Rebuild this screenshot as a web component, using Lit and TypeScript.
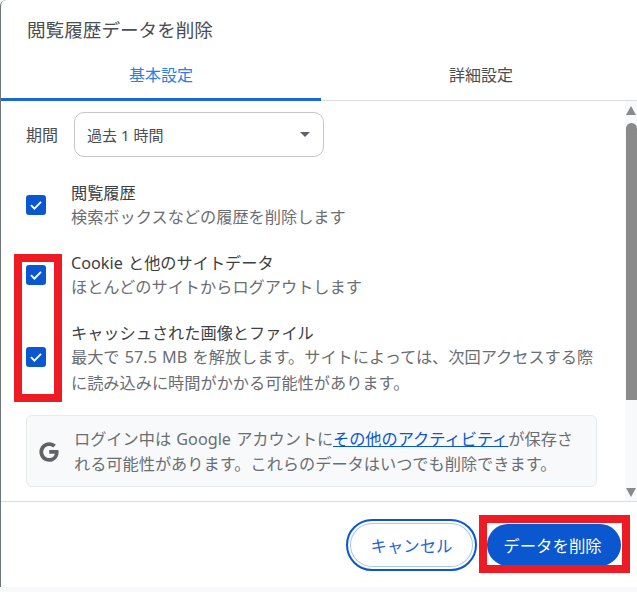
import { LitElement, html, css, svg } from "lit";
import { customElement } from "lit/decorators.js";

@customElement("app-root")
export class AppRoot extends LitElement {
  static styles = css`
    :host { display: block; width: 637px; height: 592px; position: relative; overflow: hidden; background: #f8f9fb; font-family: "Noto Sans", "Noto Sans CJK JP", sans-serif; }
    .dialog { width: 637px; height: 587px; box-sizing: border-box; background: #fff; border-left: 1px solid #70757a; border-top-left-radius: 6px; display: flex; flex-direction: column; }
    .title { font-size: 18.6px; line-height: 24px; color: #4a4e52; padding: 18px 0 1px 26px; height: 24px; }
    .tabs { display: flex; height: 58px; border-bottom: 1px solid #dadce0; box-sizing: border-box; }
    .tab { flex: 0 0 320px; display: flex; align-items: center; justify-content: center; font-size: 16px; color: #5f6368; box-sizing: border-box; padding-top: 6px; border-bottom: 3px solid transparent; margin-bottom: -1px; }
    .tab.active { color: #2a7de8; border-bottom-color: #1a67d8; }
    .tab.second { color: #4a4e52; }
    .middle { height: 400px; display: flex; }
    .content { flex: 1; padding: 11px 0 0 25px; min-width: 0; }
    .period { display: flex; align-items: center; gap: 16px; font-size: 16px; color: #4a4e52; }
    .period-label { margin-bottom: 2px; }
    .select { width: 250px; height: 45px; box-sizing: border-box; border: 1px solid #c4c7c5; border-radius: 10px; display: flex; align-items: center; justify-content: space-between; padding: 0 13px 0 12px; color: #4a4e52; font-size: 15px; }
    .caret { width: 0; height: 0; border-left: 5px solid transparent; border-right: 5px solid transparent; border-top: 5px solid #5f6368; }
    .rows { display: flex; flex-direction: column; gap: 22px; margin-top: 25px; }
    .row { display: flex; align-items: flex-start; gap: 25px; font-size: 16.2px; word-spacing: 1px; }
    .box { flex: none; width: 20px; height: 20px; margin-top: 13px; border-radius: 3px; background: #0b57d0; display: flex; align-items: center; justify-content: center; }
    .box.low { margin-top: 25px; }
    .name { color: #3c4043; line-height: 22px; white-space: nowrap; }
    .sub { color: #6a6e73; line-height: 26px; white-space: nowrap; }
    .notice { margin-top: 19px; width: 571px; height: 72px; box-sizing: border-box; border: 1px solid #e8eaed; border-radius: 6px; background: #f8f9fa; display: flex; align-items: center; gap: 13px; padding: 2px 0 0 10px; color: #6a6e73; font-size: 16.2px; line-height: 25px; white-space: nowrap; word-spacing: 1px; }
    .notice a { color: #0b57d0; text-decoration: underline; }
    .notice svg { flex: none; }
    .bar { flex: 0 0 12px; background: #f8f9fa; display: flex; flex-direction: column; align-items: center; padding-top: 5px; box-sizing: border-box; }
    .up { width: 0; height: 0; border-left: 5.5px solid transparent; border-right: 5.5px solid transparent; border-bottom: 9px solid #8a8a8a; }
    .down { width: 0; height: 0; border-left: 5.5px solid transparent; border-right: 5.5px solid transparent; border-top: 9px solid #8a8a8a; margin-top: auto; margin-bottom: 4px; }
    .thumb { width: 11px; height: 277px; margin-top: 8px; background: #8a8a8a; border-radius: 6px 6px 0 0; }
    .footer { border-top: 1px solid #dadce0; flex: 1; display: flex; justify-content: flex-end; align-items: center; gap: 10px; padding: 0 16px 0 0; box-sizing: border-box; }
    .btn { display: flex; align-items: center; justify-content: center; font-size: 16.4px; box-sizing: border-box; }
    .cancel { width: 131px; height: 52px; border-radius: 26px; border: 2px solid #0b57d0; color: #1a67d8; background: #fff; box-shadow: inset 0 0 0 2px #fff, inset 0 0 0 3px #a8c7fa; }
    .ok { width: 134px; height: 42px; border-radius: 21px; background: #0b57d0; color: #fff; padding-right: 3px; }
    .mark { position: absolute; box-sizing: border-box; border: 8px solid #ed1c24; }
    .m1 { left: 14px; top: 254px; width: 48px; height: 148px; }
    .m2 { left: 479px; top: 515px; width: 151px; height: 58px; }
  `;

  private check(low = false) {
    return html`<span class="box ${low ? "low" : ""}"><svg width="14" height="14" viewBox="0 0 14 14">${svg`<path d="M2 7.2 5.4 10.6 12 3.8" fill="none" stroke="#fff" stroke-width="1.9"/>`}</svg></span>`;
  }

  render() {
    return html`
      <div class="dialog">
        <div class="title">閲覧履歴データを削除</div>
        <div class="tabs">
          <div class="tab active">基本設定</div>
          <div class="tab second">詳細設定</div>
        </div>
        <div class="middle">
          <div class="content">
            <div class="period">
              <span class="period-label">期間</span>
              <div class="select"><span>過去 1 時間</span><span class="caret"></span></div>
            </div>
            <div class="rows">
              <div class="row">
                ${this.check()}
                <div><div class="name">閲覧履歴</div><div class="sub">検索ボックスなどの履歴を削除します</div></div>
              </div>
              <div class="row">
                ${this.check()}
                <div><div class="name">Cookie と他のサイトデータ</div><div class="sub">ほとんどのサイトからログアウトします</div></div>
              </div>
              <div class="row">
                ${this.check(true)}
                <div><div class="name">キャッシュされた画像とファイル</div><div class="sub">最大で 57.5 MB を解放します。サイトによっては、次回アクセスする際<br>に読み込みに時間がかかる可能性があります。</div></div>
              </div>
            </div>
            <div class="notice">
              <svg width="24" height="24" viewBox="0 0 22 22">${svg`<path d="M11.2 9.2v3.4h5.200c-.5 2.500-2.500 3.900-5.200 3.900-3.100 0-5.500-2.500-5.500-5.500s2.400-5.500 5.500-5.500c1.400 0 2.600.5 3.600 1.300l2.500-2.500C15.700 2.800 13.600 2 11.200 2 6.200 2 2.200 6 2.200 11s4 9 9 9c4.500 0 8.600-3.300 8.600-9 0-.6-.1-1.200-.2-1.800z" fill="#5f6368"/>`}</svg>
              <div>ログイン中は Google アカウントに<a>その他のアクティビティ</a>が保存さ<br>れる可能性があります。これらのデータはいつでも削除できます。</div>
            </div>
          </div>
          <div class="bar"><span class="up"></span><span class="thumb"></span><span class="down"></span></div>
        </div>
        <div class="footer">
          <div class="btn cancel">キャンセル</div>
          <div class="btn ok">データを削除</div>
        </div>
      </div>
      <div class="mark m1"></div>
      <div class="mark m2"></div>
    `;
  }
}
